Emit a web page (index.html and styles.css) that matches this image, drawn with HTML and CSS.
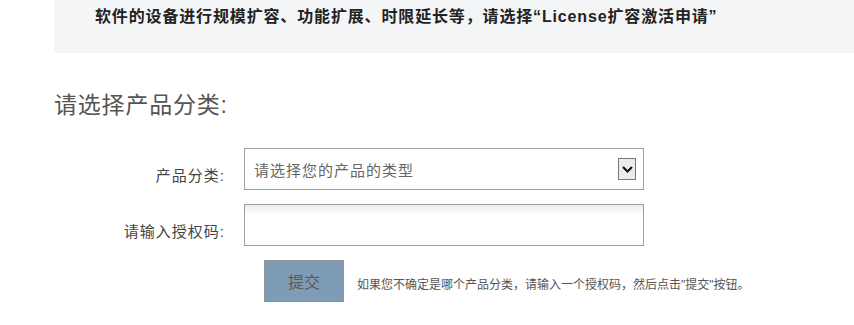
FILE: index.html
```html
<!DOCTYPE html>
<html lang="zh">
<head>
<meta charset="utf-8">
<link rel="stylesheet" href="styles.css">
</head>
<body>
<div class="notice">
  <p class="notice-text">软件的设备进行规模扩容、功能扩展、时限延长等，请选择“License扩容激活申请”</p>
</div>
<h2 class="title">请选择产品分类:</h2>
<form class="form">
  <div class="row">
    <label class="label">产品分类:</label>
    <div class="select">
      <span class="select-text">请选择您的产品的类型</span>
      <span class="select-btn">
        <svg width="11" height="7" viewBox="0 0 11 7"><path d="M1 1 L5.5 5.5 L10 1" fill="none" stroke="#111" stroke-width="2"/></svg>
      </span>
    </div>
  </div>
  <div class="row">
    <label class="label">请输入授权码:</label>
    <div class="input"></div>
  </div>
  <div class="actions">
    <button type="button" class="submit">提交</button>
    <span class="hint">如果您不确定是哪个产品分类，请输入一个授权码，然后点击"提交"按钮。</span>
  </div>
</form>
</body>
</html>
```
FILE: styles.css
```css
html, body {
  margin: 0;
  padding: 0;
  background: #fff;
  font-family: "Liberation Sans", "Noto Sans CJK SC", sans-serif;
}
.notice {
  margin-left: 54px;
  height: 53px;
  background: #f4f5f7;
  box-sizing: border-box;
  padding: 7px 0 0 41px;
}
.notice-text {
  margin: 0;
  font-size: 16px;
  letter-spacing: 0.85px;
  font-weight: bold;
  line-height: 20px;
  color: #222;
}
.title {
  margin: 37px 0 0 54px;
  font-size: 23px;
  letter-spacing: 0.8px;
  font-weight: normal;
  line-height: 30px;
  color: #555;
}
.form {
  margin-top: 28px;
  display: flex;
  flex-direction: column;
  gap: 14px;
}
.row {
  display: flex;
  align-items: center;
  gap: 19px;
}
.label {
  width: 225px;
  text-align: right;
  font-size: 15px;
  letter-spacing: 1px;
  color: #444;
  padding-top: 11px;
}
.select {
  width: 400px;
  height: 42px;
  box-sizing: border-box;
  border: 1px solid #a0a0a0;
  display: flex;
  align-items: center;
  justify-content: space-between;
  padding: 0 7px 0 9px;
}
.select-text {
  font-size: 15px;
  letter-spacing: 1px;
  color: #666;
}
.select-btn {
  width: 18px;
  height: 22px;
  box-sizing: border-box;
  border: 1px solid #777;
  background: #ececec;
  display: flex;
  align-items: center;
  justify-content: center;
}
.input {
  width: 400px;
  height: 42px;
  box-sizing: border-box;
  border: 1px solid #a0a0a0;
  background: linear-gradient(#e4eef7 0, #f6f9fc 6px, #fff 10px);
}
.actions {
  display: flex;
  align-items: center;
  gap: 13px;
  padding-left: 264px;
}
.submit {
  width: 80px;
  height: 42px;
  border: 1px solid #8f949a;
  background: #7f9cb7;
  color: #5a5a5a;
  font-family: "Liberation Sans", "Noto Sans CJK SC", sans-serif;
  font-size: 16px;
  padding: 0;
}
.hint {
  font-size: 12px;
  color: #555;
  padding-top: 4px;
}
```
